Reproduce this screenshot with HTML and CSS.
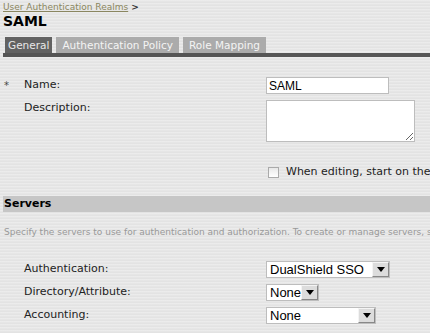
FILE: index.html
```html
<!DOCTYPE html>
<html lang="en">
<head>
  <meta charset="UTF-8">
  <title>SAML</title>
  <link rel="stylesheet" href="styles.css">
</head>
<body>

<div class="page">
  <div class="crumb"><a href="javascript:;">User Authentication Realms</a> &gt;</div>
  <h1 class="title">SAML</h1>

  <!-- tabs -->
  <ul class="tabs">
    <li class="on">General</li>
    <li>Authentication Policy</li>
    <li>Role Mapping</li>
  </ul>

  <div class="form">
    <span class="req">*</span>
    <label class="lbl">Name:</label>
    <div class="ctl"><input class="text" type="text" value="SAML"></div>

    <span class="req"></span>
    <label class="lbl">Description:</label>
    <div class="ctl"><textarea class="area"></textarea></div>
  </div>

  <div class="check">
    <span class="box"></span>
    <span>When editing, start on the</span>
  </div>

  <h2 class="section">Servers</h2>
  <p class="note">Specify the servers to use for authentication and authorization. To create or manage servers, see the Servers page.</p>

  <div class="form servers">
    <span class="req"></span>
    <label class="lbl">Authentication:</label>
    <div class="ctl"><span class="select w1"><span class="val">DualShield SSO</span><span class="btn"></span></span></div>

    <span class="req"></span>
    <label class="lbl">Directory/Attribute:</label>
    <div class="ctl"><span class="select"><span class="val">None</span><span class="btn"></span></span></div>

    <span class="req"></span>
    <label class="lbl">Accounting:</label>
    <div class="ctl"><span class="select w3"><span class="val">None</span><span class="btn"></span></span></div>
  </div>
</div>

</body>
</html>
```

FILE: styles.css
```css
* {
  margin: 0;
  padding: 0;
  list-style: none;
  box-sizing: border-box;
}
html, body {
  width: 430px;
  height: 333px;
  overflow: hidden;
}
body {
  font-family: "DejaVu Sans", Verdana, sans-serif;
  font-size: 11px;
  color: #222;
  background: #e5e5e5 repeating-linear-gradient(180deg, rgba(255,255,255,0.25) 0, rgba(255,255,255,0.25) 1px, rgba(0,0,0,0.02) 2px, rgba(0,0,0,0) 3px);
}
.page {
  padding: 2px 0 0 3px;
  width: 430px;
}
.crumb {
  font-size: 9px;
  line-height: 11px;
  color: #333;
  font-weight: bold;
}
.crumb a {
  color: #8a8660;
  font-weight: normal;
}
.title {
  font-size: 14px;
  line-height: 16px;
  font-weight: bold;
  color: #000;
}
/* tabs */
.tabs {
  display: flex;
  gap: 4px;
  margin-top: 7px;
  padding-left: 2px;
  border-bottom: 4px solid #555;
  height: 21px;
  padding-top: 1px;
}
.tabs li {
  height: 16px;
  line-height: 16px;
  padding: 0 6px;
  background: #ababab;
  color: #f4f4f4;
  font-size: 10.5px;
}
.tabs li.on {
  padding: 0 3px;
  background: #626262;
  color: #e8e8e8;
}
/* form rows */
.form {
  display: grid;
  grid-template-columns: 21px 242px 1fr;
  row-gap: 6px;
  align-items: start;
  margin-top: 20px;
}
.req {
  padding-left: 1px;
  font-size: 10px;
  line-height: 17px;
  color: #444;
}
.lbl {
  line-height: 16px;
  color: #222;
}
.text {
  display: block;
  width: 123px;
  height: 17px;
  border: 1px solid #bdbdbd;
  background: #fff;
  font-family: "Liberation Sans", Arial, sans-serif;
  font-size: 12px;
  padding: 0 2px;
  color: #000;
}
.area {
  display: block;
  width: 149px;
  height: 42px;
  border: 1px solid #bdbdbd;
  background: #fff;
  resize: both;
}
.check {
  display: flex;
  align-items: center;
  gap: 7px;
  margin: 24px 0 0 265px;
  white-space: nowrap;
  line-height: 12px;
}
.check .box {
  width: 11px;
  height: 11px;
  border: 1px solid #aaa;
  background: linear-gradient(#e8e8e8, #fff);
  flex: none;
}
.section {
  margin-top: 18px;
  height: 16px;
  line-height: 16px;
  background: #c6c6c6;
  font-size: 11px;
  font-weight: bold;
  color: #000;
  padding-left: 1px;
}
.note {
  margin-top: 15px;
  font-size: 9px;
  line-height: 11px;
  color: #999;
  white-space: nowrap;
  overflow: hidden;
  padding-left: 1px;
}
.servers {
  margin-top: 23px;
}
.select {
  display: inline-flex;
  align-items: center;
  height: 17px;
  border: 1px solid #bdbdbd;
  background: #fff;
  font-family: "Liberation Sans", Arial, sans-serif;
  font-size: 13px;
  color: #000;
}
.select .val {
  flex: 1;
  padding-left: 3px;
  white-space: nowrap;
}
.select .btn {
  width: 17px;
  height: 15px;
  background: #dcdcdc;
  border: 1px solid #888;
  border-top-color: #f4f4f4;
  border-left-color: #f4f4f4;
  position: relative;
}
.select .btn::after {
  content: "";
  position: absolute;
  left: 4px;
  top: 4px;
  border-left: 4px solid transparent;
  border-right: 4px solid transparent;
  border-top: 5px solid #000;
}
.w1 {
  width: 124px;
}
.w3 {
  width: 110px;
}
```
